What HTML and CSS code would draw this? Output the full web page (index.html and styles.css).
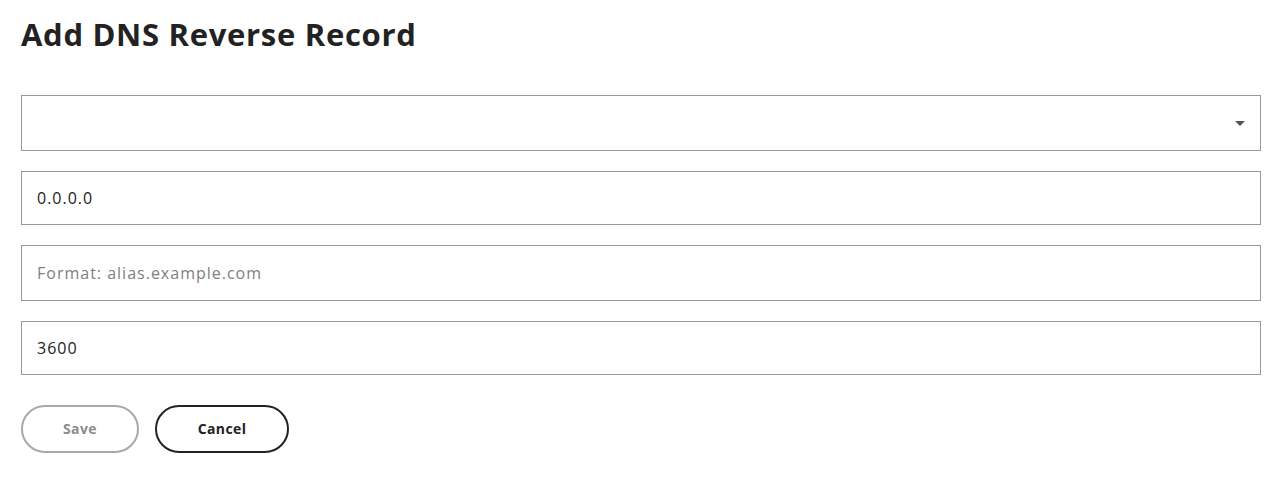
FILE: index.html
```html
<!DOCTYPE html>
<html lang="en">
<head>
<meta charset="utf-8">
<title>Add DNS Reverse Record</title>
<link rel="stylesheet" href="styles.css">
</head>
<body>
<main class="page">
  <h1 class="title">Add DNS Reverse Record</h1>
  <form class="form">
    <div class="select-wrap">
      <select class="field field-select" aria-label="Zone"><option value=""></option></select>
      <svg class="caret" width="10" height="5" viewBox="0 0 10 5" aria-hidden="true"><path d="M0 0h10L5 5z" fill="#555"/></svg>
    </div>
    <input class="field field-short" type="text" value="0.0.0.0" aria-label="IP address">
    <input class="field" type="text" placeholder="Format: alias.example.com" aria-label="Hostname">
    <input class="field field-short" type="text" value="3600" aria-label="TTL">
    <div class="actions">
      <button type="button" class="btn btn-disabled">Save</button>
      <button type="button" class="btn btn-outline">Cancel</button>
    </div>
  </form>
</main>
</body>
</html>
```
FILE: styles.css
```css
* { box-sizing: border-box; }
html, body { margin: 0; padding: 0; background: #fff; }
body { font-family: "Open Sans", "DejaVu Sans", sans-serif; color: #222; }
.page { padding: 14px 22px 0 21px; }
.title {
  margin: 0 0 41px;
  font-size: 31px;
  line-height: 40px;
  letter-spacing: 0.7px;
  font-weight: 700;
  color: #222;
}
.form { display: flex; flex-direction: column; gap: 20px; }
.select-wrap { position: relative; }
.field {
  display: block;
  width: 100%;
  height: 56px;
  border: 1px solid #9a9a9a;
  border-radius: 0;
  background: #fff;
  padding: 0 15px;
  font-family: "Open Sans", "DejaVu Sans", sans-serif;
  font-size: 16px;
  letter-spacing: 1px;
  color: #222;
  outline: none;
}
.field-short { height: 54px; }
.field::placeholder { color: #808080; opacity: 1; }
.field-select { appearance: none; -webkit-appearance: none; }
.caret { position: absolute; right: 16px; top: 26px; pointer-events: none; }
.actions { display: flex; gap: 16px; margin-top: 10px; }
.btn {
  height: 48px;
  border-radius: 24px;
  background: #fff;
  font-family: "Open Sans", "DejaVu Sans", sans-serif;
  font-weight: 700;
  font-size: 14px;
  letter-spacing: 0.4px;
  padding: 0 0 1px;
}
.btn-disabled { width: 118px; border: 2px solid #a8a8a8; color: #8c8c8c; }
.btn-outline { width: 134px; border: 2px solid #222; color: #222; }
```
